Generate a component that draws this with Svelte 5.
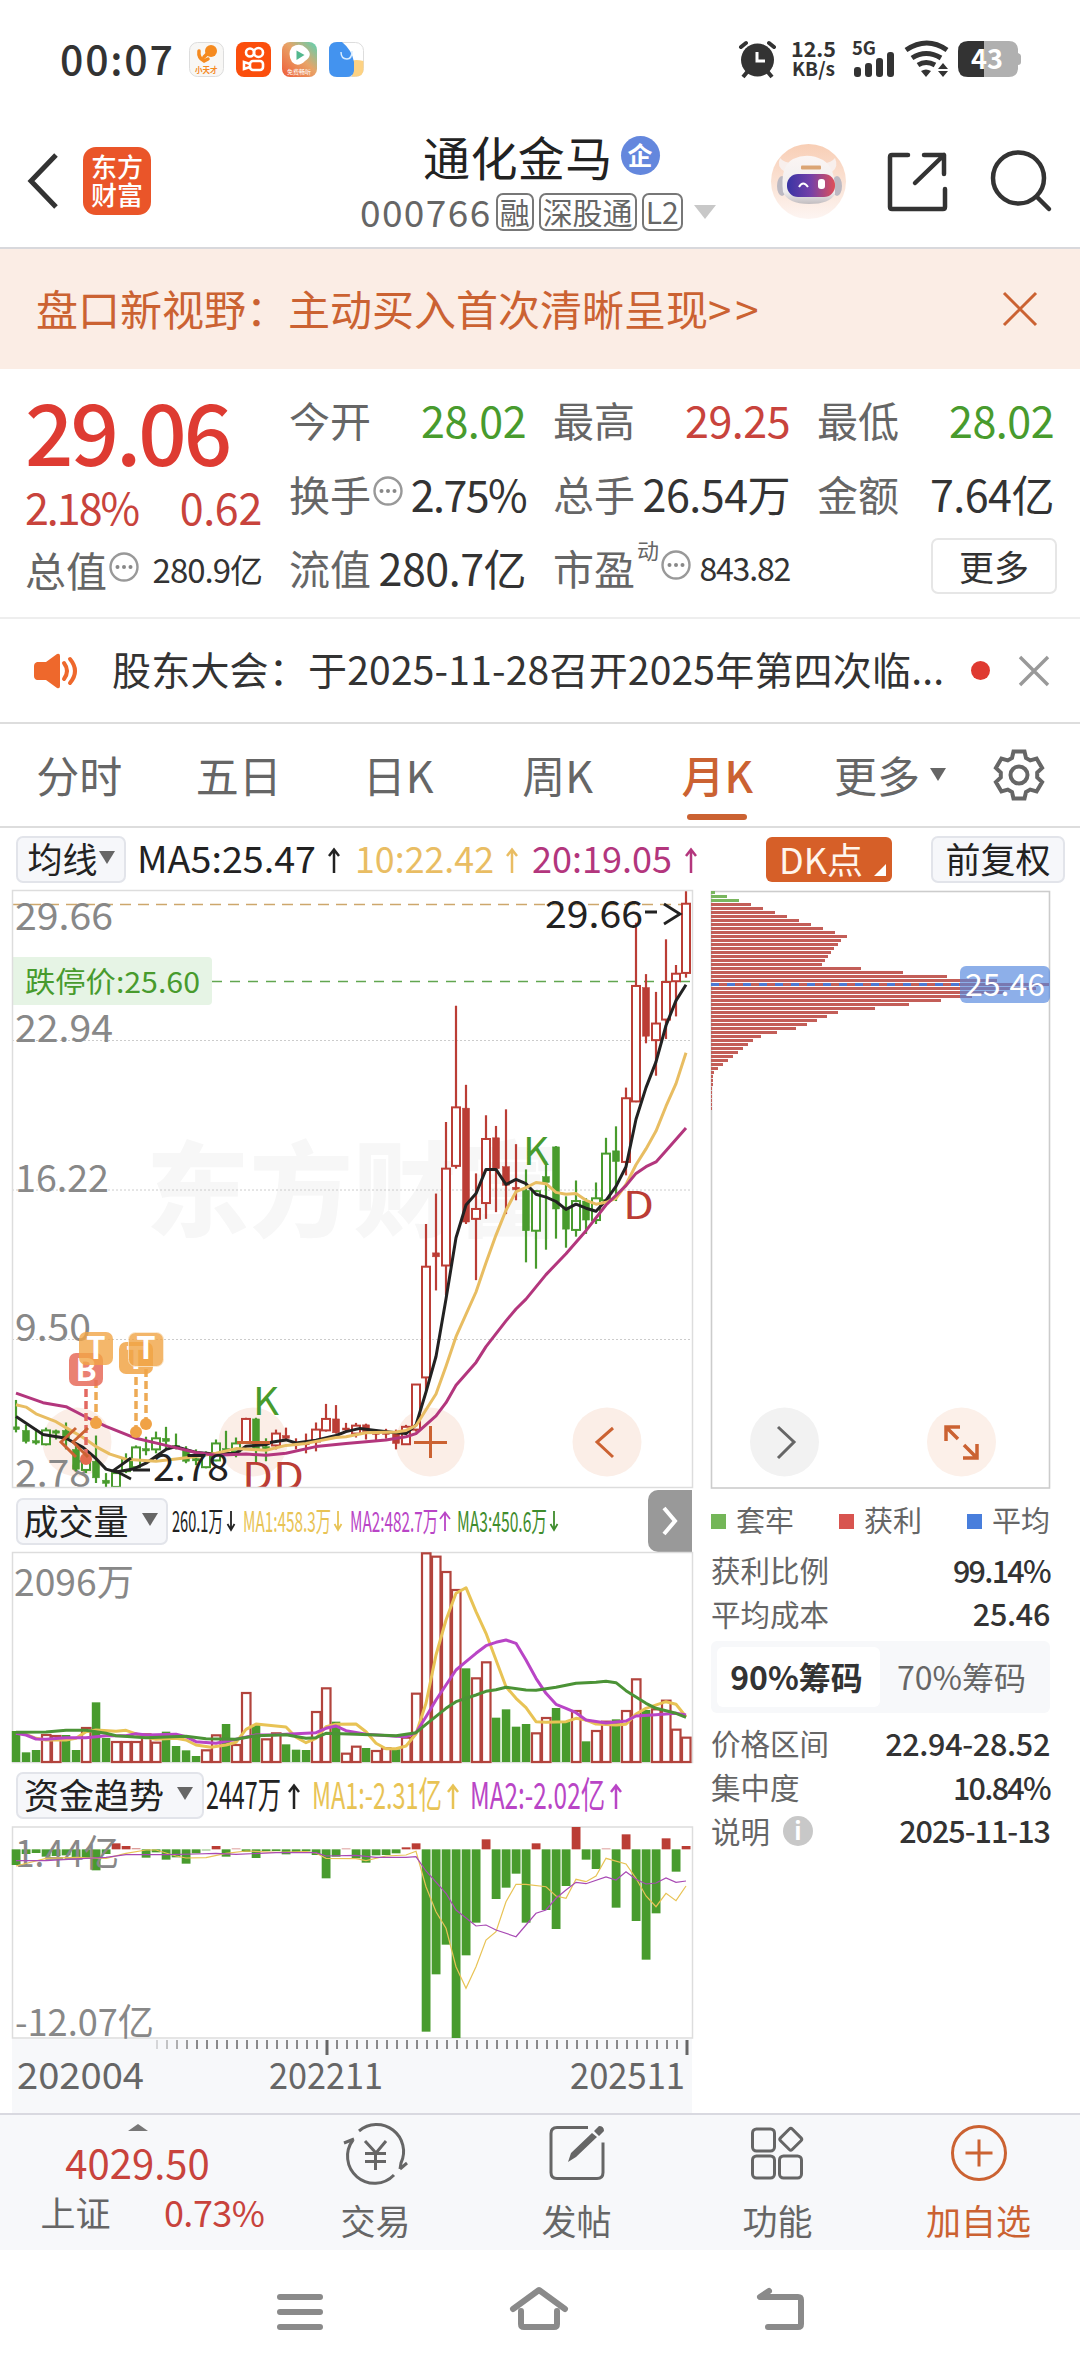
<script lang="ts">
	type Cell = { label: string; value: string; tone?: string; info?: boolean; sup?: string; small?: boolean };
	type Candle = [string, number, number, number, number];
	type Point = [number, number];

	const columns: Cell[][] = [
		[
			{ label: '今开', value: '28.02', tone: 'down' },
			{ label: '换手', value: '2.75%', info: true },
			{ label: '流值', value: '280.7亿' }
		],
		[
			{ label: '最高', value: '29.25', tone: 'up' },
			{ label: '总手', value: '26.54万' },
			{ label: '市盈', value: '843.82', info: true, sup: '动', small: true }
		],
		[
			{ label: '最低', value: '28.02', tone: 'down' },
			{ label: '金额', value: '7.64亿' }
		]
	];

	const tabs = ['分时', '五日', '日K', '周K', '月K'];
	let activeTab = $state('月K');
	let chipRange = $state('90');

	const RED = '#bb3d35';
	const GREEN = '#489b2d';

	// kind, high, top, bottom, low - upper case kinds are filled bodies
	const candles: Candle[] = [
		['G', 1315, 1383, 1390, 1397], ['G', 1378, 1392, 1420, 1425], ['G', 1388, 1418, 1424, 1428],
		['g', 1385, 1392, 1427, 1430], ['G', 1390, 1393, 1399, 1415], ['G', 1372, 1392, 1412, 1440],
		['G', 1425, 1440, 1490, 1495], ['g', 1455, 1460, 1492, 1500], ['G', 1405, 1470, 1512, 1525],
		['G', 1500, 1518, 1526, 1538], ['g', 1490, 1500, 1535, 1538], ['g', 1450, 1465, 1495, 1500],
		['g', 1430, 1435, 1485, 1490], ['G', 1408, 1438, 1444, 1455], ['g', 1395, 1412, 1440, 1450],
		['G', 1383, 1412, 1420, 1440], ['G', 1400, 1430, 1436, 1440], ['G', 1432, 1440, 1470, 1475],
		['G', 1440, 1463, 1469, 1480], ['g', 1445, 1450, 1485, 1488], ['g', 1415, 1425, 1468, 1470],
		['G', 1393, 1438, 1444, 1445], ['g', 1410, 1425, 1445, 1460], ['r', 1360, 1363, 1422, 1425],
		['G', 1360, 1363, 1440, 1475], ['G', 1412, 1433, 1440, 1470], ['r', 1390, 1400, 1430, 1440],
		['R', 1385, 1405, 1412, 1418], ['R', 1412, 1424, 1428, 1440], ['R', 1400, 1423, 1428, 1450],
		['r', 1372, 1390, 1420, 1445], ['r', 1325, 1363, 1392, 1395], ['R', 1328, 1363, 1398, 1400],
		['R', 1373, 1386, 1391, 1395], ['r', 1373, 1380, 1400, 1410], ['R', 1375, 1378, 1395, 1415],
		['R', 1393, 1397, 1401, 1420], ['R', 1388, 1397, 1401, 1413], ['R', 1390, 1400, 1425, 1440],
		['r', 1378, 1383, 1427, 1428], ['r', 1275, 1276, 1390, 1395], ['r', 870, 978, 1258, 1290],
		['R', 793, 943, 953, 1038], ['r', 612, 730, 975, 1050], ['r', 318, 575, 723, 730],
		['R', 518, 577, 865, 870], ['r', 742, 832, 857, 1012], ['r', 595, 655, 817, 857],
		['R', 622, 652, 730, 840], ['R', 580, 725, 772, 845], ['R', 668, 777, 783, 810],
		['G', 732, 785, 887, 967], ['g', 785, 787, 887, 983], ['G', 712, 750, 765, 935],
		['G', 673, 675, 832, 907], ['G', 800, 830, 883, 930], ['g', 760, 812, 885, 902],
		['G', 805, 812, 860, 895], ['g', 765, 805, 860, 870], ['g', 652, 692, 810, 820],
		['G', 623, 685, 712, 812], ['r', 525, 552, 713, 747], ['r', 108, 268, 560, 562],
		['R', 238, 272, 395, 413], ['r', 283, 363, 405, 495], ['r', 150, 258, 353, 402],
		['r', 215, 237, 256, 345], ['r', 28, 60, 235, 247]
	];

	const ma5: Point[] = [
		[0, 1357], [2.7, 1402], [5, 1412], [6.7, 1435], [8, 1463], [9, 1490], [10, 1497], [11.7, 1490], [13, 1475],
		[15, 1440], [16, 1433], [18, 1448], [20, 1452], [22, 1450], [23, 1432], [25, 1428], [25.5, 1422], [27, 1416], [28, 1424],
		[30, 1417], [32, 1405], [33, 1395], [34.4, 1387], [36, 1392], [38, 1398], [39, 1400], [40, 1378], [41, 1295],
		[42, 1205], [43, 1060], [44, 905], [45, 822], [46, 793], [47, 732], [48, 732], [49, 770], [50, 757], [51, 768],
		[52, 795], [53, 802], [54, 813], [55, 833], [56, 820], [57, 830], [58, 838], [59, 810], [60, 775], [61, 725],
		[62, 605], [63, 525], [64, 460], [65, 368], [66, 305], [67, 265]
	];
	const ma10: Point[] = [
		[0, 1327], [1, 1333], [2, 1350], [4, 1370], [5, 1385], [6.7, 1410], [8, 1433], [9.4, 1452], [11, 1465], [14, 1470],
		[16, 1464], [18, 1458], [20, 1450], [22, 1438], [25, 1442], [27, 1430], [29, 1425], [32, 1410], [33, 1408],
		[35, 1398], [38, 1396], [39, 1392], [40, 1380], [41, 1340], [42, 1300], [43, 1230], [44, 1155], [46, 1042],
		[47, 968], [48, 898], [49, 835], [50, 788], [51, 778], [52, 765], [53, 768], [54, 790], [55, 795], [56, 793],
		[57, 810], [58, 820], [59, 815], [60, 805], [61, 770], [62, 720], [63, 680], [64, 635], [65, 572], [66, 515], [67, 437]
	];
	const ma20: Point[] = [
		[0, 1298], [2.7, 1322], [5, 1332], [7, 1358], [9, 1382], [12, 1412], [15, 1430], [18, 1448], [20, 1455], [23, 1452],
		[25, 1455], [27, 1450], [30, 1433], [33, 1425], [37, 1416], [39, 1408], [40, 1400], [42, 1355], [43, 1322],
		[44, 1278], [46, 1220], [47, 1180], [49, 1115], [50, 1085], [51, 1060], [53, 998], [55, 945], [57, 887], [59, 822],
		[61, 773], [62, 742], [63, 725], [64, 713], [65, 685], [67, 627]
	];

	const volumes =
		'723G 787G 780G 732R 735R 735G 780G 711R 637G 744G 753R 753R 753R 730R 755R 725G 768G 781G 798G 778R 733R 702G 762R 606R 705G 745R 727R 763G 779G 780G 663R 592R 695G 788R 767R 774G 780R 772R 778G 740R 608R 187R 197R 243R 297R 535G 562R 514R 683G 658G 710G 702G 727R 681R 654G 693G 660R 754G 720R 692R 688G 660R 565R 660G 655R 629R 716R 740R'.split(' ');
	const vol1: Point[] = [
		[0, 730], [1, 733], [2, 745], [3, 750], [5, 750], [6, 745], [7, 725], [8, 720], [10, 724], [11, 721], [13, 742],
		[14, 748], [16, 745], [17, 750], [18, 765], [19.5, 772], [21, 765], [22, 757], [23, 718], [24, 702], [25, 705],
		[27, 711], [28, 742], [29, 758], [30, 745], [31, 710], [32, 703], [34, 702], [35, 725], [36, 760], [37, 776],
		[38, 776], [39, 768], [40, 732], [41, 640], [42, 495], [43, 390], [44, 310], [45, 293], [46, 365], [47, 430],
		[48, 510], [49, 590], [50, 625], [51, 653], [52, 695], [53, 697], [55, 695], [56, 685], [57, 690], [58, 702],
		[60, 705], [61, 703], [62, 672], [63, 655], [65, 635], [66, 643], [67, 680]
	];
	const vol2: Point[] = [
		[0, 730], [1, 735], [2, 747], [3, 748], [5, 743], [7, 743], [9, 737], [11, 737], [12, 731], [13, 735], [16, 733],
		[17, 740], [18, 755], [20, 760], [22, 748], [24, 735], [26, 734], [28, 731], [30, 728], [31, 715], [32, 708],
		[33, 722], [35, 733], [38, 739], [39, 740], [40, 728], [41, 680], [42, 630], [43, 585], [44, 540], [45, 515],
		[46, 490], [47, 467], [48, 457], [49, 450], [50, 460], [51, 510], [52, 565], [53, 610], [54, 643], [55, 655],
		[56, 668], [57, 690], [59, 699], [61, 693], [62, 678], [64, 674], [66, 670], [67, 675]
	];
	const vol3: Point[] = [
		[0, 727], [3, 726], [5, 721], [7, 721], [9, 730], [10, 737], [13, 743], [17, 739], [19, 746], [22, 748], [24, 737],
		[27, 734], [29, 745], [30, 743], [31, 730], [34, 733], [38, 737], [40, 728], [41, 703], [43, 655], [44, 635],
		[45, 625], [46, 615], [47, 604], [48, 599], [49, 592], [51, 600], [52, 601], [54, 592], [56, 580], [58, 577],
		[59, 574], [60, 578], [61, 602], [63, 640], [64, 655], [66, 670], [67, 682]
	];

	const funds = [
		285, 252, 249, 260, 258, 256, 262, 266, 301, 252, 220, 228, 234, 263, 247, 269, 262, 281, 250, 242, 228, 260, 235,
		246, 264, 243, 243, 253, 248, 244, 255, 325, 260, 235, 265, 278, 256, 255, 250, 232, 220, 785, 613, 524, 804, 556,
		458, 208, 387, 353, 311, 458, 220, 420, 477, 348, 171, 269, 297, 235, 413, 193, 453, 569, 430, 205, 305, 228
	];
	const fund1: Point[] = [
		[0, 288], [3, 265], [6, 262], [9, 265], [11, 250], [13, 240], [14, 240], [16, 258], [17, 264], [19, 263], [21, 250],
		[23, 243], [26, 247], [29, 245], [30, 249], [31, 265], [34, 266], [35, 272], [37, 258], [39, 255], [40, 244],
		[41, 350], [42, 425], [43, 475], [44, 590], [45, 655], [46, 590], [47, 510], [48, 485], [49, 395], [50, 343],
		[51, 343], [53, 350], [54, 378], [55, 385], [56, 328], [57, 335], [58, 318], [59, 265], [61, 282], [62, 325],
		[63, 378], [64, 410], [65, 370], [66, 392], [67, 348]
	];
	const fund2: Point[] = [
		[0, 272], [3, 272], [7, 265], [9, 262], [11, 254], [15, 254], [18, 252], [20, 250], [22, 253], [26, 248], [30, 248],
		[31, 258], [34, 256], [36, 262], [39, 262], [40, 260], [41, 303], [43, 370], [44, 420], [46, 468], [47, 465],
		[48, 480], [50, 500], [51, 465], [52, 430], [53, 420], [54, 385], [55, 360], [56, 337], [57, 341], [59, 321],
		[60, 330], [61, 305], [62, 328], [63, 342], [64, 339], [65, 324], [66, 337], [67, 333]
	];

	const chips = [
		4, 16, 28, 40, 52, 64, 76, 88, 100, 112, 124, 136, 130, 127, 123, 120, 117, 114, 111, 150, 192, 236, 286, 338, 325,
		293, 261, 230, 198, 164, 127, 116, 106, 96, 85, 66, 50, 42, 37, 32, 27, 22, 17, 12, 7, 3, 2, 2, 2, 1, 1, 1, 1, 1, 1
	];

	const x = (i: number) => 16 + i * 10;
	const py = (v: number) => 880 + v * 0.3954;
	const vy = (v: number) => 1490 + v / 3;
	const fy = (v: number) => 1770 + v / 3;
	const line = (pts: Point[], scale: (v: number) => number) =>
		pts.map(([i, v]) => `${x(i).toFixed(1)},${scale(v).toFixed(1)}`).join(' ');

	const gear = [0, 1, 2, 3, 4, 5]
		.flatMap((k) => {
			const a = (k * Math.PI) / 3;
			return [[-7, -17], [-5.5, -23.5], [5.5, -23.5], [7, -17]].map(
				([px, q]) => `${(px * Math.cos(a) - q * Math.sin(a)).toFixed(1)},${(px * Math.sin(a) + q * Math.cos(a)).toFixed(1)}`
			);
		})
		.join(' ');
</script>

{#snippet dots()}
	<svg class="dots" width="30" height="30" viewBox="0 0 30 30">
		<circle cx="15" cy="15" r="13.5" fill="none" stroke="#999" stroke-width="2.4" />
		<circle cx="8.5" cy="15" r="2" fill="#888" /><circle cx="15" cy="15" r="2" fill="#888" /><circle cx="21.5" cy="15" r="2" fill="#888" />
	</svg>
{/snippet}

{#snippet fit(tx: number, ty: number, w: number, size: number, color: string, text: string)}
	<text x={tx} y={ty} font-size={size} fill={color} textLength={w} lengthAdjust="spacingAndGlyphs">{text}</text>
{/snippet}

{#snippet arrow(ax: number, top: number, h: number, color: string, up: boolean)}
	<path
		d={up ? `M${ax} ${top + h}V${top + 1}m-5 7l5-6.5l5 6.5` : `M${ax} ${top}v${h - 1}m-3.5 -6l3.5 6l3.5-6`}
		fill="none" stroke={color} stroke-width={h > 21 ? 2.5 : 1.8} />
{/snippet}

<div class="screen">
	<div class="status">
		<span class="clock">00:07</span>
		<div class="apps">
			<svg width="35" height="35" viewBox="0 0 35 35">
				<rect x=".5" y=".5" width="34" height="34" rx="8" fill="#f8f7f5" stroke="#ddd" />
				<circle cx="22" cy="9" r="6" fill="#f58a1f" /><path d="M10 9q-1 7 5 10l4-2M19 11l-4 4" stroke="#f58a1f" stroke-width="3.5" fill="none" stroke-linecap="round" />
				<text x="6" y="31" font-size="7.5" font-weight="700" fill="#f58a1f">小天才</text>
			</svg>
			<svg width="35" height="35" viewBox="0 0 35 35">
				<rect width="35" height="35" rx="8" fill="#fb4e0c" />
				<g fill="none" stroke="#fff" stroke-width="2.6"><circle cx="14" cy="10.500" r="4" /><circle cx="22.500" cy="10.500" r="4.500" /><rect x="14" y="19" width="13" height="9" rx="3" /><path d="M14 22l-6-2v7l6-2" /></g>
			</svg>
			<svg width="35" height="35" viewBox="0 0 35 35">
				<defs><linearGradient id="tv" x1="1" y1="0" x2="0" y2="1"><stop offset="0" stop-color="#58d3b4" /><stop offset=".45" stop-color="#e8a468" /><stop offset="1" stop-color="#ef5b37" /></linearGradient></defs>
				<rect width="35" height="35" rx="8" fill="url(#tv)" />
				<path d="M10 5q8-5 14 1q8 7-1 13q-7 7-13 1q-5-8 0-15z" fill="#fff" /><path d="M14.500 8.500l8 4.500l-8 5z" fill="#53b88e" />
				<text x="5" y="32" font-size="6" fill="#fff">免费畅听</text>
			</svg>
			<svg width="35" height="35" viewBox="0 0 35 35">
				<rect x=".5" y=".5" width="34" height="34" rx="8" fill="#fff" stroke="#ddd" />
				<path d="M23 34.500V19q3-2 11.500 0v8q0 7.500-7.500 7.500z" fill="#fdd283" />
				<path d="M8 0h5q10 8 12 20v9q-1 6-8 6H8q-8 0-8-8V8q0-8 8-8z" fill="#4393ef" />
				<path d="M12 10q0 7 6 7q5 0 5-8" fill="none" stroke="#d8ecff" stroke-width="1.500" />
			</svg>
		</div>
		<svg class="system" width="285" height="40" viewBox="737 41 285 40">
			<g fill="#333" stroke="#333">
				<circle cx="756.500" cy="61" r="16.500" stroke="none" />
				<path d="M740 48l5-4M773 48l-5-4" stroke-width="4" stroke-linecap="round" /><path d="M747 72l-5 6M766 72l5 6" stroke-width="4" />
				<path d="M756 53v9h8" fill="none" stroke="#fff" stroke-width="3" />
			</g>
			<g font-weight="700">
				{@render fit(790, 57.5, 45, 20.5, '#333', '12.5')}
				{@render fit(791, 77, 43, 19, '#333', 'KB/s')}
				{@render fit(851, 56, 24, 18.5, '#333', '5G')}
			</g>
			<g fill="#333"><rect x="853" y="68" width="7" height="10" rx="3" /><rect x="864" y="64" width="7" height="14" rx="3" /><rect x="875" y="59" width="7" height="19" rx="3" /><rect x="886" y="53" width="7" height="25" rx="3" /></g>
			<g fill="none" stroke="#333" stroke-width="5"><path d="M905 51q21-14 41 0M911 59q14-9 29 0M917 66q8-5 17 0" /></g>
			<path d="M920 72q5-3 10 0l-5 6zM937 70l5-6l5 6zM937 72l5 6l5-6z" fill="#333" />
			<path d="M983 42h25q8 0 9 8v4q3 1 3 3v6q0 3-3 3v4q-1 8-9 8h-25z" fill="#b0b0b0" />
			<path d="M967 42h16v36h-16q-10 0-10-10V52q0-10 10-10z" fill="#333" />
			<g font-weight="700">{@render fit(970, 70, 32, 27, '#fff', '43')}</g>
		</svg>
	</div>

	<header>
		<svg class="back" width="34" height="56" viewBox="0 0 34 56"><path d="M30 2L5 28l25 26" fill="none" stroke="#333" stroke-width="5" /></svg>
		<div class="logo"><span>东方</span><span>财富</span></div>
		<div class="title">
			<div class="name">通化金马<span class="corp">企</span></div>
			<div class="code">000766<i class="first">融</i><i>深股通</i><i>L2</i><b></b></div>
		</div>
		<svg class="robot" width="76" height="76" viewBox="770 143 76 76">
			<defs>
				<linearGradient id="halo" x1="0" y1="0" x2="0" y2="1"><stop offset="0" stop-color="#f8ceb5" /><stop offset="1" stop-color="#fdf5f2" /></linearGradient>
				<linearGradient id="shell" x1="0" y1="0" x2="0" y2="1"><stop offset="0" stop-color="#fbf5f3" /><stop offset=".75" stop-color="#efedee" /><stop offset="1" stop-color="#c2bdc0" /></linearGradient>
				<linearGradient id="visor"><stop offset="0" stop-color="#3934a4" /><stop offset=".5" stop-color="#7541a8" /><stop offset="1" stop-color="#df4f58" /></linearGradient>
			</defs>
			<circle cx="808.500" cy="181.500" r="37.500" fill="url(#halo)" />
			<path d="M780 158q-4 9 5 14l8-9q-9 0-13-5zM835 158q4 9-3 14l-8-9q7 0 11-5z" fill="#f8efec" />
			<ellipse cx="782" cy="186" rx="5" ry="10" fill="#bcb9c2" /><ellipse cx="837" cy="186" rx="5" ry="10" fill="#bcb9c2" />
			<path d="M783 192q-3-26 10-33q15-7 30 1q13 8 12 34q-5 10-26 10q-21 0-26-12z" fill="url(#shell)" />
			<rect x="801" y="165.500" width="20" height="4" rx="1" fill="#dba574" />
			<rect x="787" y="174" width="48" height="23" rx="11" fill="url(#visor)" />
			<path d="M799 187q4-7 9 0" stroke="#fff" stroke-width="2" fill="none" /><rect x="818" y="179" width="7" height="10" rx="3" fill="#fff" />
		</svg>
		<svg width="60" height="60" viewBox="887 151 60 60"><g fill="none" stroke="#333" stroke-width="4.500" stroke-linecap="round" stroke-linejoin="round"><path d="M908 155h-16q-2 0-2 2v50q0 2 2 2h51q2 0 2-2v-18M924 155h20v19M944 155l-29 28" /></g></svg>
		<svg width="62" height="62" viewBox="990 150 62 62"><circle cx="1018.500" cy="178" r="25.500" fill="none" stroke="#333" stroke-width="4.500" /><path d="M1037 197l12 12" stroke="#333" stroke-width="4.500" stroke-linecap="round" /></svg>
	</header>

	<div class="banner">
		<span>盘口新视野：主动买入首次清晰呈现<u>&gt;&gt;</u></span>
		<svg width="34" height="34" viewBox="0 0 34 34"><path d="M1 1l32 32M33 1L1 33" stroke="#cb6232" stroke-width="3" /></svg>
	</div>

	<section class="quote">
		<div class="col">
			<div class="price">29.06</div>
			<div class="change"><span class="pct">2.18%</span><span>0.62</span></div>
			<div class="cell small"><label>总值</label>{@render dots()}<span>280.9亿</span></div>
		</div>
		{#each columns as col}
			<div class="col">
				{#each col as c}
					<div class="cell {c.tone ?? ''}" class:small={c.small}>
						<label>{c.label}</label>{#if c.sup}<sup>{c.sup}</sup>{/if}{#if c.info}{@render dots()}{/if}<span class:pct={c.value.endsWith('%')}>{c.value}</span>
					</div>
				{/each}
				{#if col.length < 3}<div class="cell end"><button class="more">更多</button></div>{/if}
			</div>
		{/each}
	</section>

	<div class="notice">
		<svg width="46" height="38" viewBox="0 0 46 38"><path d="M3 10h9L23 2q3-1 3 2v30q0 3-3 2L12 28H3q-3-1-3-4V14q0-3 3-4z" fill="#ee682c" /><path d="M30 11q6 8 0 16M36 7q10 12 0 24" fill="none" stroke="#ee682c" stroke-width="4" stroke-linecap="round" /></svg>
		<span>股东大会：于2025-11-28召开2025年第四次临...</span>
		<i></i>
		<svg width="30" height="30" viewBox="0 0 30 30"><path d="M1 1l28 28M29 1L1 29" stroke="#999" stroke-width="3.400" /></svg>
	</div>

	<nav class="tabs">
		{#each tabs as tab}
			<button class:active={tab === activeTab} onclick={() => (activeTab = tab)}>{tab}</button>
		{/each}
		<button class="menu">更多<b></b></button>
		<svg width="56" height="56" viewBox="-28 -28 56 56"><g fill="none" stroke="#666" stroke-width="4"><polygon points={gear} /><circle r="8.500" /></g></svg>
	</nav>

	<div class="averages">
		<button class="pill">均线<b></b></button>
		<svg width="580" height="62" viewBox="130 828 580 62">
			{@render fit(137, 873, 179, 36.5, '#222', 'MA5:25.47')}
			{@render arrow(334, 848, 25, '#222', true)}
			{@render fit(355, 873, 139, 36.5, '#e9bd63', '10:22.42')}
			{@render arrow(512, 848, 25, '#e9bd63', true)}
			{@render fit(532, 873, 140, 36.5, '#b3367d', '20:19.05')}
			{@render arrow(691, 848, 25, '#b3367d', true)}
		</svg>
		<button class="dk">DK点</button>
		<button class="pill fq">前复权</button>
	</div>

	<main>
		<div class="left">
			<svg width="700" height="600" viewBox="0 890 700 600">
				<defs><clipPath id="kline"><rect x="12" y="890" width="681" height="598" /></clipPath></defs>
				<g clip-path="url(#kline)">
					<text x="146" y="1229" font-size="103" font-weight="900" fill="#f7f7f7" textLength="414">东方财富</text>
					<g stroke="#ccc" stroke-dasharray="2 2"><path d="M12 1040.500H692M12 1190H692M12 1339.500H692" /></g>
					<path d="M12 904.500H692" stroke="#cda76c" stroke-width="1.500" stroke-dasharray="11 7" />
					<path d="M212 981.500H692" stroke="#62a650" stroke-width="1.500" stroke-dasharray="10 8" />
					<g fill="#fbeee7"><circle cx="77" cy="1442" r="34.500" /><circle cx="253" cy="1442" r="34.500" /><circle cx="430" cy="1442" r="34.500" /><circle cx="607" cy="1442" r="34.500" /></g>
					{@render fit(15, 930, 98, 38, '#888', '29.66')}
					{@render fit(15, 1042, 98, 38, '#888', '22.94')}
					{@render fit(15, 1191.5, 94, 38, '#888', '16.22')}
					{@render fit(15, 1341, 76, 38, '#888', '9.50')}
					{@render fit(15, 1486.5, 76, 38, '#888', '2.78')}
					<path d="M12 957h196q4 0 4 4v40q0 4-4 4H12z" fill="#e6f4e5" />
					{@render fit(25, 992.5, 175, 29, '#489b2d', '跌停价:25.60')}
					{#each candles as [kind, high, top, bottom, low], i}
						{@const color = kind.toUpperCase() === 'R' ? RED : GREEN}
						{@const hollow = kind === 'r' || kind === 'g'}
						<path d={`M${x(i)} ${py(high)}V${py(low)}`} stroke={color} stroke-width="2.200" />
						<rect
							x={hollow ? x(i) - 4 : x(i) - 3.5}
							y={py(top)}
							width={hollow ? 8 : 7}
							height={Math.max(2, (bottom - top) * 0.3954)}
							fill={hollow ? '#fff' : color}
							stroke={color}
							stroke-width={hollow ? 2 : 0.5} />
					{/each}
					<g fill="none" stroke-width="3" stroke-linejoin="round">
						<polyline points={line(ma5, py)} stroke="#222" />
						<polyline points={line(ma10, py)} stroke="#e8bd62" />
						<polyline points={line(ma20, py)} stroke="#b3367d" />
					</g>
					{@render fit(545, 928, 98, 38, '#222', '29.66')}
					<path d="M645 912h12M664 904l16 10l-16 10" fill="none" stroke="#222" stroke-width="2.800" />
					{@render fit(153, 1480.5, 76, 38, '#222', '2.78')}
					<path d="M150 1470h-17M131 1458l-17 12l17 9" fill="none" stroke="#222" stroke-width="2.800" />
					{@render fit(253, 1414.5, 26, 38, GREEN, 'K')}
					{@render fit(523, 1165, 26, 38, GREEN, 'K')}
					{@render fit(242, 1490, 62, 38, RED, 'DD')}
					{@render fit(623, 1219, 31, 38, RED, 'D')}
					<g fill="none" stroke-width="3.500" stroke-dasharray="8 4"><path d="M86 1389v70" stroke="#e36961" /><path d="M96 1380v42M136 1377v52M146 1369v54" stroke="#edaa55" /></g>
					<circle cx="86" cy="1459" r="6" fill="#e36b4e" /><g fill="#f0a246"><circle cx="96" cy="1423" r="6" /><circle cx="136" cy="1432" r="6" /><circle cx="146" cy="1424" r="6" /></g>
					<rect x="69" y="1353" width="34" height="33" rx="7" fill="#e66b5a" opacity=".85" />
					<g font-weight="700" font-size="31" text-anchor="middle" fill="#fff">
						<text x="86" y="1381">B</text>
						<rect x="79" y="1332" width="34" height="33" rx="7" fill="#f1a546" opacity=".8" /><text x="96" y="1359">T</text>
						<rect x="119" y="1342" width="34" height="32" rx="7" fill="#f1a546" opacity=".85" /><text x="136" y="1369">T</text>
						<rect x="128.500" y="1332.500" width="35" height="34" rx="7" fill="#f1a546" opacity=".8" stroke="#fbe6c8" /><text x="146" y="1359">T</text>
					</g>
					<g fill="none" stroke="#cb6232" stroke-width="3"><path d="M76 1428l-15 14l15 15M88 1428l-15 14l15 15M237 1442.500h33M414 1442.500h33M430.500 1426v32M613 1428l-16 14l16 15" /></g>
				</g>
				<rect x="12.500" y="890.500" width="680" height="597" fill="none" stroke="#ddd" stroke-width="1.500" />
			</svg>

			<div class="readout">
				<button class="pill">成交量<b></b></button>
				<svg width="400" height="62" viewBox="170 1490 400 62">
					{@render fit(172, 1532, 51, 28.5, '#222', '260.1万')}
					{@render arrow(231, 1511, 20, '#222', false)}
					{@render fit(243, 1532, 88, 28.5, '#e8c355', 'MA1:458.3万')}
					{@render arrow(338, 1511, 20, '#e8c355', false)}
					{@render fit(350, 1532, 88, 28.5, '#b945c6', 'MA2:482.7万')}
					{@render arrow(445, 1511, 20, '#b945c6', true)}
					{@render fit(457, 1532, 90, 28.5, '#3f8c2d', 'MA3:450.6万')}
					{@render arrow(554, 1511, 20, '#3f8c2d', false)}
				</svg>
				<button class="expand" aria-label="next"><svg width="18" height="30" viewBox="0 0 18 30"><path d="M3 2l11 13L3 28" fill="none" stroke="#fff" stroke-width="4" /></svg></button>
			</div>

			<svg width="700" height="212" viewBox="0 1552 700 212">
				<rect x="12.500" y="1552.500" width="680" height="210" fill="none" stroke="#ddd" stroke-width="1.500" />
				{@render fit(14, 1596, 120, 37, '#888', '2096万')}
				{#each volumes as v, i}
					{@const top = vy(parseInt(v))}
					{#if v.endsWith('G')}
						<rect x={x(i) - 4.2} y={top} width="8.500" height={1762 - top} fill={GREEN} />
					{:else}
						<rect x={x(i) - 4} y={top + 1} width="8.500" height={1761 - top} fill="#fff" stroke="#b2443d" stroke-width="2.200" />
					{/if}
				{/each}
				<g fill="none" stroke-width="3" stroke-linejoin="round">
					<polyline points={line(vol1, vy)} stroke="#e8c355" />
					<polyline points={line(vol2, vy)} stroke="#b945c6" />
					<polyline points={line(vol3, vy)} stroke="#4b9336" />
				</g>
			</svg>

			<div class="readout fund">
				<button class="pill">资金趋势<b></b></button>
				<svg width="430" height="62" viewBox="204 1764 430 62">
					{@render fit(206, 1809, 75, 37, '#222', '2447万')}
					{@render arrow(294, 1784, 25, '#222', true)}
					{@render fit(312, 1809, 130, 37, '#e8c355', 'MA1:-2.31亿')}
					{@render arrow(453, 1784, 25, '#e8c355', true)}
					{@render fit(470, 1809, 135, 37, '#b945c6', 'MA2:-2.02亿')}
					{@render arrow(616, 1784, 25, '#b945c6', true)}
				</svg>
			</div>

			<svg width="700" height="287" viewBox="0 1826 700 287">
				<rect x="12.500" y="1827" width="680" height="211" fill="none" stroke="#ddd" stroke-width="1.500" />
				{#each funds as v, i}
					<rect
						x={x(i) - 4.3}
						y={fy(Math.min(v, 238))}
						width="8.800"
						height={Math.max(1, Math.abs(v - 238) / 3)}
						fill={v < 238 ? RED : GREEN}
						opacity={Math.abs(v - 238) < 5 ? 0.5 : 1} />
				{/each}
				{@render fit(15, 1867, 104, 37, '#888', '1.44亿')}
				{@render fit(15, 2036, 139, 37, '#888', '-12.07亿')}
				<g fill="none" stroke-width="1.200"><polyline points={line(fund1, fy)} stroke="#e8c355" /><polyline points={line(fund2, fy)} stroke="#a84ab4" /></g>
				<rect x="12" y="2039" width="680" height="74" fill="#f7f8fa" />
				{#each Array(54) as _, k}
					{@const major = k === 17 || k === 53}
					<path d={`M${157 + k * 10} 2040v${major ? 15 : 9}`} stroke="#666" stroke-width={major ? 3 : 1.5} opacity={Math.min(1, 0.3 + k * 0.18)} />
				{/each}
				{@render fit(17, 2089, 127, 37, '#666', '202004')}
				{@render fit(269, 2089, 114, 37, '#666', '202211')}
				{@render fit(570, 2089, 115, 37, '#666', '202511')}
			</svg>
		</div>

		<aside>
			<svg width="370" height="600" viewBox="710 890 370 600">
				<rect x="711.500" y="891.500" width="338" height="596.500" fill="#fff" stroke="#ccc" stroke-width="1.600" />
				{#each chips as w, k}
					<rect x="711" y={891 + k * 4} width={w} height="3" fill={k < 3 ? '#79b65e' : '#c35e58'} />
				{/each}
				<path d="M711 984.500H960" stroke="#4d78d4" stroke-width="3" stroke-dasharray="8 8" />
				<rect x="960" y="966" width="90" height="37" rx="6" fill="#5286dd" opacity=".66" />
				{@render fit(965, 996, 80, 31, '#fff', '25.46')}
				<circle cx="784.500" cy="1442" r="34.500" fill="#f2f2f2" /><path d="M778 1427l16 15l-16 16" fill="none" stroke="#666" stroke-width="3" />
				<circle cx="961.500" cy="1442" r="34.500" fill="#fcf0e9" />
				<path d="M946 1441v-14h14M947 1428l11 11M977 1444v14h-14M964 1445l13 13" fill="none" stroke="#cb6232" stroke-width="3.500" />
			</svg>
			<div class="legend"><span class="trapped">套牢</span><span class="profit">获利</span><span class="mean">平均</span></div>
			<dl>
				<div><dt>获利比例</dt><dd class="tight">99.14%</dd></div>
				<div><dt>平均成本</dt><dd>25.46</dd></div>
			</dl>
			<div class="segment">
				<button class:on={chipRange === '90'} onclick={() => (chipRange = '90')}>90%筹码</button>
				<button class:on={chipRange === '70'} onclick={() => (chipRange = '70')}>70%筹码</button>
			</div>
			<dl>
				<div><dt>价格区间</dt><dd>22.94-28.52</dd></div>
				<div><dt>集中度</dt><dd class="tight">10.84%</dd></div>
				<div><dt>说明<i>i</i></dt><dd class="date">2025-11-13</dd></div>
			</dl>
		</aside>
	</main>

	<footer>
		<div class="index">
			<b></b>
			<strong>4029.50</strong>
			<div><span>上证</span><em>0.73%</em></div>
		</div>
		<div class="action">
			<svg width="66" height="60" viewBox="343 2124 66 60"><g fill="none" stroke="#666" stroke-width="3"><path d="M359 2132A27 27 0 0 1 401 2164l-1 6m0 0l7-6M394 2176A27 27 0 0 1 353 2141m1-1l-10 4M365 2142l11 12l10-12M365 2154.500h21M365 2162.500h21M375.500 2154v17" /></g></svg>
			<span>交易</span>
		</div>
		<div class="action">
			<svg width="60" height="60" viewBox="547 2124 60 60"><path d="M588 2128.500h-31q-6 0-6 6v39q0 6 6 6h40q6 0 6-6v-30" fill="none" stroke="#666" stroke-width="3" /><path d="M568 2163l3-9l21-20l5 4l-21 20zM594 2132l5-5q5 0 5 5l-5 5z" fill="#666" /></svg>
			<span>发帖</span>
		</div>
		<div class="action">
			<svg width="60" height="60" viewBox="749 2124 60 60"><g fill="none" stroke="#666" stroke-width="3"><rect x="753.500" y="2130" width="22" height="22" rx="4" /><rect x="753.500" y="2157" width="22" height="22" rx="4" /><rect x="780.500" y="2157" width="22" height="22" rx="4" /><rect x="783.500" y="2132" width="16.500" height="16.500" rx="2" transform="rotate(45 791.700 2140.300)" /></g></svg>
			<span>功能</span>
		</div>
		<div class="action add">
			<svg width="60" height="60" viewBox="949 2124 60 60"><g fill="none" stroke="#cb6232" stroke-width="3"><circle cx="979" cy="2154" r="26.500" /><path d="M965.500 2154h27M979 2140.500v27" /></g></svg>
			<span>加自选</span>
		</div>
	</footer>

	<div class="keys">
		<svg width="50" height="50" viewBox="275 2285 50 50"><path d="M280 2298h40M280 2313h40M280 2328h40" stroke="#8a8a8a" stroke-width="6" stroke-linecap="round" /></svg>
		<svg width="60" height="50" viewBox="510 2285 60 50"><path d="M514 2310l26-19l26 19M522 2312v13q0 3 3 3h30q3 0 3-3v-13" fill="none" stroke="#8a8a8a" stroke-width="6" stroke-linecap="round" stroke-linejoin="round" /></svg>
		<svg width="54" height="50" viewBox="753 2285 54 50"><path d="M769 2292l-9 6h38q3 0 3 3v24q0 3-3 3h-30" fill="none" stroke="#8a8a8a" stroke-width="6" stroke-linecap="round" stroke-linejoin="round" /></svg>
	</div>
</div>

<style>
	:global(body) {
		background: #fff;
	}

	.screen {
		width: 1080px;
		height: 2376px;
		overflow: hidden;
		background: #fff;
		color: #333;
		font-family: 'Noto Sans CJK SC', 'Noto Sans', sans-serif;
		line-height: 1;
	}

	.screen * {
		box-sizing: border-box;
	}

	svg {
		display: block;
		flex-shrink: 0;
		overflow: visible;
	}

	button {
		display: flex;
		align-items: center;
		justify-content: center;
		padding: 0;
		border: 0;
		background: none;
		color: inherit;
		font: inherit;
		white-space: nowrap;
	}

	.status {
		display: flex;
		align-items: center;
		height: 118px;
		padding: 0 57px 0 60px;
	}

	.clock {
		width: 129px;
		margin-top: -3px;
		font-size: 41px;
		font-weight: 500;
		letter-spacing: 1.800px;
	}

	.apps {
		display: flex;
		gap: 11.500px;
	}

	.system {
		margin: 2px 0 0 auto;
	}

	header {
		display: flex;
		align-items: center;
		height: 131px;
		padding: 0 28px 3px 26px;
		border-bottom: 2px solid #d8d8dc;
	}

	.logo {
		display: flex;
		flex-direction: column;
		align-items: center;
		justify-content: center;
		gap: 2px;
		width: 68px;
		height: 68px;
		margin-left: 23px;
		padding-bottom: 2px;
		border-radius: 13px;
		background: #ea5529;
		color: #fff;
		font-size: 26px;
		font-weight: 500;
	}

	.title {
		flex: 1;
		padding: 0 0 0 209px;
		white-space: nowrap;
	}

	.name {
		display: flex;
		align-items: center;
		margin-left: 63px;
		color: #222;
		font-size: 47px;
		letter-spacing: 0.400px;
	}

	.corp {
		width: 39px;
		height: 39px;
		margin-left: 8px;
		border-radius: 50%;
		background: #6487dd;
		color: #fff;
		font-size: 25px;
		font-weight: 700;
		line-height: 36px;
		text-align: center;
	}

	.code {
		display: flex;
		align-items: center;
		margin-top: 14px;
		color: #666;
		font-size: 37px;
		letter-spacing: 1.400px;
	}

	.code i {
		height: 38px;
		margin: 0 5px 0 0;
		padding: 0 2px;
		border: 2px solid #777;
		border-radius: 7px;
		font-size: 30px;
		font-style: normal;
		line-height: 32px;
		letter-spacing: 0;
	}

	.code .first {
		margin-left: 4px;
	}

	.code b {
		margin-left: 6px;
		border: 11px solid transparent;
		border-top: 14px solid #c8c8c8;
		border-bottom: 0;
	}

	.robot {
		margin-right: 41px;
	}

	.robot + svg {
		margin-right: 43px;
	}

	.banner {
		display: flex;
		align-items: center;
		justify-content: space-between;
		height: 120px;
		padding: 0 43px 0 36px;
		background: #fbede5;
		color: #cb6232;
		font-size: 42px;
	}

	.banner span {
		margin-top: -2px;
	}

	.banner u {
		letter-spacing: 4px;
		text-decoration: none;
	}

	.quote {
		display: grid;
		grid-template-columns: repeat(4, 237px);
		gap: 27px;
		height: 250px;
		padding: 13px 25px 0 25px;
		border-bottom: 2px solid #eee;
	}

	.price {
		height: 98px;
		color: #de3b32;
		font-size: 85px;
		font-weight: 500;
		line-height: 94px;
		letter-spacing: -3px;
	}

	.change {
		display: flex;
		align-items: center;
		justify-content: space-between;
		height: 52px;
		color: #c8433c;
		font-size: 43px;
		letter-spacing: -0.300px;
	}

	.change .pct {
		letter-spacing: -2px;
	}

	.cell {
		display: flex;
		align-items: center;
		height: 74px;
		white-space: nowrap;
	}

	.cell label {
		color: #666;
		font-size: 41px;
	}

	.cell span {
		margin-left: auto;
		font-size: 43px;
		letter-spacing: -0.500px;
	}

	.cell .pct {
		letter-spacing: -1.600px;
	}

	.cell.small span {
		font-size: 33px;
		letter-spacing: -1px;
	}

	.cell.small sup ~ span {
		font-size: 32px;
		letter-spacing: -1.200px;
	}

	.cell.up span {
		color: #c8433c;
	}

	.cell.down span {
		color: #489b2d;
	}

	.cell.end {
		justify-content: flex-end;
	}

	.cell sup {
		align-self: flex-start;
		margin: 8px 0 0 2px;
		color: #666;
		font-size: 22px;
		line-height: 22px;
	}

	.dots {
		margin: -4px 0 0 2px;
	}

	.more {
		width: 126px;
		height: 56px;
		margin: -2px -3px 0 0;
		padding-bottom: 2px;
		border: 2px solid #e6e6e6;
		border-radius: 7px;
		font-size: 35px;
	}

	.notice {
		display: flex;
		align-items: center;
		height: 105px;
		padding: 0 30px 0 34px;
		border-bottom: 2px solid #ddd;
		font-size: 39px;
		white-space: nowrap;
	}

	.notice span {
		width: 859px;
		margin: -4px 0 0 32px;
		letter-spacing: 0.200px;
	}

	.notice i {
		width: 19px;
		height: 19px;
		margin-right: 29px;
		border-radius: 50%;
		background: #df3a31;
	}

	.tabs {
		display: flex;
		align-items: center;
		height: 104px;
		border-bottom: 2px solid #ddd;
		color: #666;
		font-size: 43px;
	}

	.tabs button {
		position: relative;
		width: 159.500px;
		height: 100px;
		padding: 0 1px 1px 0;
	}

	.tabs .active {
		color: #cb6232;
		font-weight: 500;
	}

	.tabs .active::after {
		content: '';
		position: absolute;
		bottom: 5px;
		width: 60px;
		height: 6px;
		border-radius: 3px;
		background: #cb6232;
	}

	.tabs .menu {
		width: 186px;
	}

	.tabs svg {
		margin: 0 0 0 7px;
	}

	.menu b,
	.pill b {
		margin-left: 10px;
		border: 8px solid transparent;
		border-top: 13px solid #666;
		border-bottom: 0;
	}

	.averages {
		display: flex;
		align-items: center;
		height: 62px;
		padding-left: 16px;
	}

	.pill {
		width: 110px;
		height: 47px;
		padding-bottom: 3px;
		border: 2px solid #e2e4ea;
		border-radius: 7px;
		background: #f6f7fa;
		color: #222;
		font-size: 35px;
	}

	.averages .pill b {
		margin-left: 1px;
	}

	.averages .pill + svg {
		margin-left: 4px;
	}

	.dk {
		position: relative;
		width: 126px;
		height: 45px;
		margin-left: 56px;
		padding: 0 16px 3px 0;
		border-radius: 6px;
		background: #d65f28;
		color: #fff5ec;
		font-size: 36px;
	}

	.dk::after {
		content: '';
		position: absolute;
		right: 6px;
		bottom: 6px;
		border: 6px solid;
		border-color: transparent #fff #fff transparent;
	}

	.pill.fq {
		width: 134px;
		margin-left: 39px;
	}

	main {
		display: flex;
		height: 1223px;
	}

	.left {
		width: 700px;
	}

	.readout {
		display: flex;
		align-items: center;
		height: 62px;
		padding: 0 8px 0 16px;
	}

	.readout .pill {
		width: 152px;
		margin-right: 2px;
		padding: 0 3px 3px 0;
	}

	.readout.fund .pill {
		width: 188px;
		margin-right: 0;
	}

	.readout .pill b {
		margin-left: 13px;
	}

	.expand {
		width: 44px;
		height: 62px;
		margin-left: auto;
		border-radius: 10px 0 0 10px;
		background: #999;
	}

	aside {
		width: 370px;
		margin-left: 10px;
	}

	.legend {
		display: flex;
		justify-content: space-between;
		align-items: center;
		width: 340px;
		height: 58px;
		padding-left: 1px;
		color: #666;
		font-size: 29px;
	}

	.legend span::before {
		content: '';
		display: inline-block;
		width: 15px;
		height: 15px;
		margin: 0 10px 3px 0;
		background: #74b658;
	}

	.legend .profit::before {
		background: #d8544f;
	}

	.legend .mean::before {
		background: #487edc;
	}

	dl {
		width: 340px;
		margin: 0;
	}

	dl div {
		display: flex;
		align-items: center;
		justify-content: space-between;
		height: 43.700px;
		padding-left: 1px;
	}

	dt {
		display: flex;
		align-items: center;
		color: #666;
		font-size: 29.500px;
	}

	dt i {
		width: 30px;
		height: 30px;
		margin-left: 13px;
		border-radius: 50%;
		background: #c8c8c8;
		color: #fff;
		font-size: 24px;
		font-style: normal;
		font-weight: 700;
		line-height: 28px;
		text-align: center;
	}

	dd {
		margin: 0;
		font-size: 30.500px;
		font-weight: 500;
		letter-spacing: -0.300px;
	}

	dd.tight {
		letter-spacing: -1.700px;
	}

	dd.date {
		letter-spacing: -1px;
	}

	.segment {
		display: flex;
		width: 339px;
		height: 72px;
		margin: 6px 0 8px 1px;
		padding: 6px;
		border-radius: 6px;
		background: #f7f8fa;
		color: #666;
		font-size: 32px;
	}

	.segment button {
		width: 163px;
		padding-bottom: 2px;
		border-radius: 6px;
	}

	.segment .on {
		padding-right: 4px;
		background: #fff;
		color: #333;
		font-weight: 700;
	}

	footer {
		display: flex;
		height: 137px;
		border-top: 2px solid #d9d9e0;
		background: #f7f8fa;
		color: #666;
	}

	.index {
		display: flex;
		flex-direction: column;
		align-items: center;
		width: 275px;
		padding: 9px 0 0;
		color: #c8433c;
	}

	.index b {
		border: 10px solid transparent;
		border-top: 0;
		border-bottom: 7px solid #777;
	}

	.index strong {
		margin-top: 11px;
		font-size: 40px;
		font-weight: 400;
	}

	.index div {
		display: flex;
		justify-content: space-between;
		align-items: center;
		width: 224px;
		margin-top: 11px;
		margin-left: 30px;
		font-size: 36px;
	}

	.index span {
		color: #666;
		font-size: 35px;
	}

	.index em {
		font-style: normal;
		letter-spacing: -0.500px;
	}

	.action {
		display: flex;
		flex-direction: column;
		align-items: center;
		width: 201px;
		padding-top: 8px;
		font-size: 35px;
	}

	.action span {
		margin-top: 19px;
	}

	.add {
		color: #cb6232;
	}

	.keys {
		display: flex;
		justify-content: space-between;
		padding: 34px 273px 0 275px;
	}
</style>
